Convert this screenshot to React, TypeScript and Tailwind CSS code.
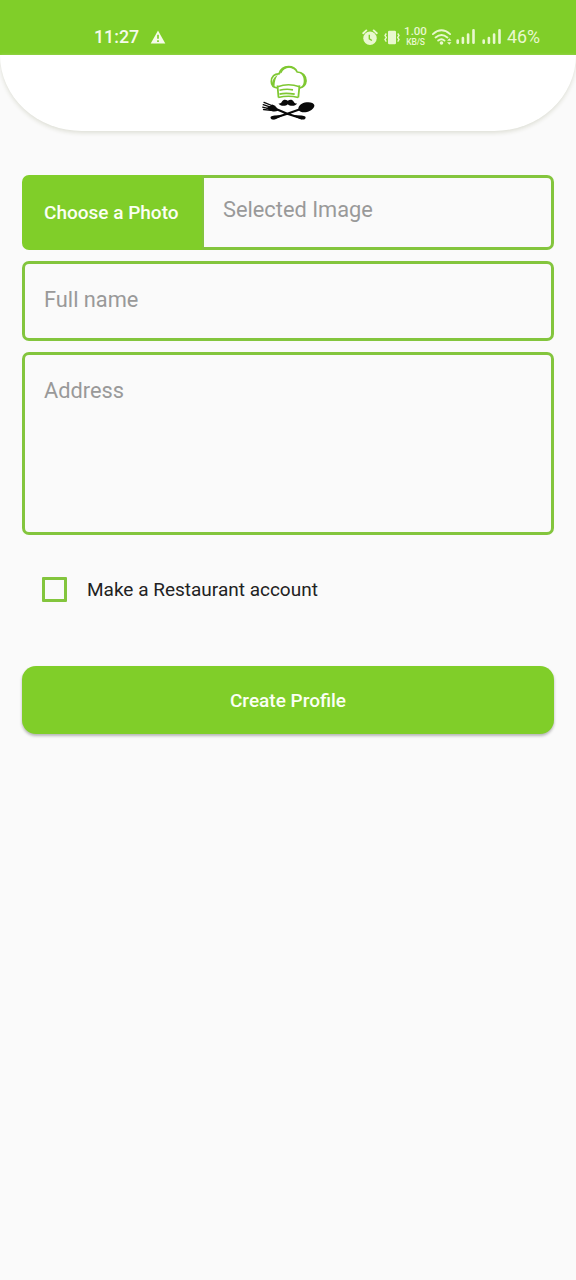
import React from "react";

function WarningIcon() {
  return (
    <svg className="ml-[11px] h-[14px] w-[16px]" viewBox="0 0 16 14">
      <path d="M8 .4 15.3 13.4H.7z" fill="#f5fbe9" />
      <path d="M8 4.8v4M8 10.3v1.6" stroke="#80ce29" strokeWidth="1.7" />
    </svg>
  );
}

function AlarmIcon() {
  return (
    <svg className="h-[17px] w-[16px]" viewBox="0 0 16 17" fill="none">
      <circle cx="8" cy="9.3" r="6.7" fill="#e9f8cf" />
      <path d="M1.2 4.2 4.3 1.4M14.8 4.2 11.7 1.4" stroke="#e9f8cf" strokeWidth="1.9" strokeLinecap="round" />
      <path d="M7.3 5.8v4l2.6 1.7" stroke="#80ce29" strokeWidth="1.4" />
    </svg>
  );
}

function VibrateIcon() {
  return (
    <svg className="ml-[6px] h-[15px] w-[16px]" viewBox="0 0 16 15" fill="none">
      <rect x="4" y=".8" width="8" height="13.4" rx="1.2" fill="#e9f8cf" />
      <path d="M2.3 3.5 1 5.4l1.3 2.1L1 9.6l1.3 2M13.7 3.5 15 5.4l-1.3 2.1L15 9.6l-1.3 2" stroke="#e9f8cf" strokeWidth="1.4" />
    </svg>
  );
}

function WifiIcon() {
  return (
    <svg className="ml-[5px] h-[17px] w-[20px]" viewBox="0 0 20 17" fill="none">
      <path d="M.9 5.1Q9.5-2.4 18.1 5.1M3.6 8.5q5.9-5 11.8 0M6.2 11.6q3.3-2.6 6.3 0" stroke="#e9f8cf" strokeWidth="1.9" strokeLinecap="round" />
      <circle cx="9.5" cy="14" r="1.8" fill="#e9f8cf" />
      <path d="m15.1 11.7 2.2-2.5 2.2 2.5zM15.1 13.2h4.4l-2.2 2.5z" fill="#e9f8cf" />
    </svg>
  );
}

function SignalIcon() {
  return (
    <svg className="h-[15px] w-[20px]" viewBox="0 0 20 15">
      <path d="M1.7 13.7v-2.2M6.9 13.7V9M12.1 13.7V5.5M17.5 13.7V1.3" stroke="#e9f8cf" strokeWidth="2.6" strokeLinecap="round" />
    </svg>
  );
}

function StatusBar() {
  return (
    <div className="flex h-[55px] items-center bg-[#80ce29] pt-[19px] pr-[36px] pl-[94px]">
      <span className="w-[45px] text-[17.8px] leading-5 font-medium text-[#f5fbe9]">11:27</span>
      <WarningIcon />
      <div className="ml-auto flex items-center">
        <AlarmIcon />
        <VibrateIcon />
        <div className="ml-[4px] flex w-[23px] flex-col items-center font-medium text-[#e9f8cf]">
          <span className="h-[10px] text-[11.5px] leading-[9px]">1.00</span>
          <span className="text-[8.5px] leading-[10px] tracking-[-.2px]">KB/S</span>
        </div>
        <WifiIcon />
        <div className="ml-[4px] flex gap-[6px] pb-px">
          <SignalIcon />
          <SignalIcon />
        </div>
        <span className="ml-[5px] w-[33px] text-[17.8px] leading-5 whitespace-nowrap text-[#e9f8cf]">46%</span>
      </div>
    </div>
  );
}

function ChefLogo() {
  return (
    <svg className="h-[56px] w-[54px]" viewBox="0 0 54 56" fill="none">
      <g transform="translate(.5)">
        <path d="M15.8 23C12 22.5 9.8 20 9.8 16.5 9.8 11.5 13.3 8.5 17.5 8.8 19 4 22.5 1.7 27 1.7c4 0 7.2 1.8 8.7 5.3C41 7 44.8 11.2 44.5 16c-.2 3.7-2.5 6.1-6.2 7" stroke="#7fc832" strokeWidth="1.7" />
        <path d="M10.3 20c.5-5 2-8 6-10.3-2 3-3.3 6.7-3.3 11.8zM36 7.2c4.7 1.2 6.5 5 6.2 9.2-.1 2.4-1.1 4.5-2.9 6.2 4.5-1.5 6-5 5.3-8.8-.8-4.1-4.5-6.9-8.6-6.6zM20 8c1.4-3.3 4.2-5 7.7-5.3 3 .2 5.5 1.6 7 4.3-2.2-5-5.5-6-8.6-5.8-4 .2-6.5 3.3-7.6 7.3z" fill="#7fc832" />
        <path d="M16 20.5 17 32.5M38 20.4 36.8 32.5" stroke="#7fc832" strokeWidth="1.8" />
        <path d="M16.2 21.7c6.7-2.4 14.8-2.4 21.8 0M16.8 32.5c6.7-1.7 13.6-1.7 20 0" stroke="#7fc832" strokeWidth="1.6" />
        <path d="M18 25.2c4-1 9-1.2 13.5-.4M18 29.1c4.2-1 9-1 15.2.1" stroke="#7fc832" strokeWidth="1.7" />
      </g>
      <path d="M26.8 35.8c-2.2-1.8-4.6-1.4-5.8.7-.8 1.5-1.9 2.2-3.5 2 1.7 2.9 7.2 2.9 9.3.7 2.1 2.2 7.6 2.2 9.3-.7-1.6.2-2.7-.5-3.5-2-1.2-2.1-3.6-2.5-5.8-.7z" fill="#090909" />
      <path d="m15 44 11.3 4.7 14 4.5M39 44.3l-12.7 4.4-14 4.5" stroke="#090909" strokeWidth="2" strokeLinecap="round" />
      <path d="m30 50 10.7.5c3.3.3 4.8 1.6 3.5 3.2-1.3 1.5-3.7.9-5.5 0zM23 50l-9.5.5c-3.3.3-4.8 1.6-3.5 3.2 1.3 1.5 3.7.9 5.5 0z" fill="#090909" />
      <path d="M37.6 44.9c-1-3 1.8-6.3 6.2-7.3 4.8-1.1 9 .1 9.5 2.4.6 2.6-2.8 5.9-7.3 6.9-3.4.8-7.1.3-8.4-2z" fill="#090909" />
      <path d="m5 43.4 5.4 2.5c2.5.9 5 .6 6.7-.4-.7-2.5-2.5-4.9-5.8-6.1z" fill="#090909" />
      <path d="m3 37.3 9 3.7M2.2 39.7l8.9 3M1.7 42.1l8.1 2M2.5 44.5l7.3.8" stroke="#090909" strokeWidth="1.3" strokeLinecap="round" />
    </svg>
  );
}

export default function App() {
  return (
    <div className="min-h-[1280px] w-[576px] bg-[#fafafa] font-['Roboto',sans-serif]">
      <StatusBar />
      <header className="flex h-[76px] justify-center rounded-b-[82px_76px] bg-white pt-[10px] shadow-[0_2px_4px_#dedfd6]">
        <ChefLogo />
      </header>
      <main className="flex flex-col px-[22px] pt-[44px]">
        <div className="flex h-[75px]">
          <button className="w-[182px] rounded-l-[7px] border-r-2 border-[#83c53d] bg-[#80ce29] pl-[22px] text-left text-[19px] font-medium text-[#fbfff4]">
            <span className="block pt-[2px]">Choose a Photo</span>
          </button>
          <div className="flex-1 rounded-r-[7px] border-[3px] border-l-0 border-[#83c53d] pt-[18px] pl-[19px] text-[21.8px] leading-[27px] text-[#999]">Selected Image</div>
        </div>
        <div className="mt-[11px] h-[80px] rounded-[7px] border-[3px] border-[#83c53d] pt-[22px] pl-[19px] text-[21.8px] leading-[27px] text-[#999]">Full name</div>
        <div className="mt-[10.5px] h-[183.5px] rounded-[7px] border-[3px] border-[#83c53d] pt-[22px] pl-[19px] text-[21.8px] leading-[27px] text-[#999]">Address</div>
        <label className="mt-[42px] ml-[20px] flex h-[25px] items-center">
          <span className="size-[25px] rounded-[1px] border-[3px] border-[#83c53d]" />
          <span className="ml-[20px] pt-[2px] text-[19px] text-[#222]">Make a Restaurant account</span>
        </label>
        <button className="mt-[64px] h-[68px] rounded-[14px] bg-[#80ce29] pt-[2px] text-[19px] font-medium text-[#fbfff4] shadow-[0_2px_3px_#b5b5b5]">Create Profile</button>
      </main>
    </div>
  );
}
